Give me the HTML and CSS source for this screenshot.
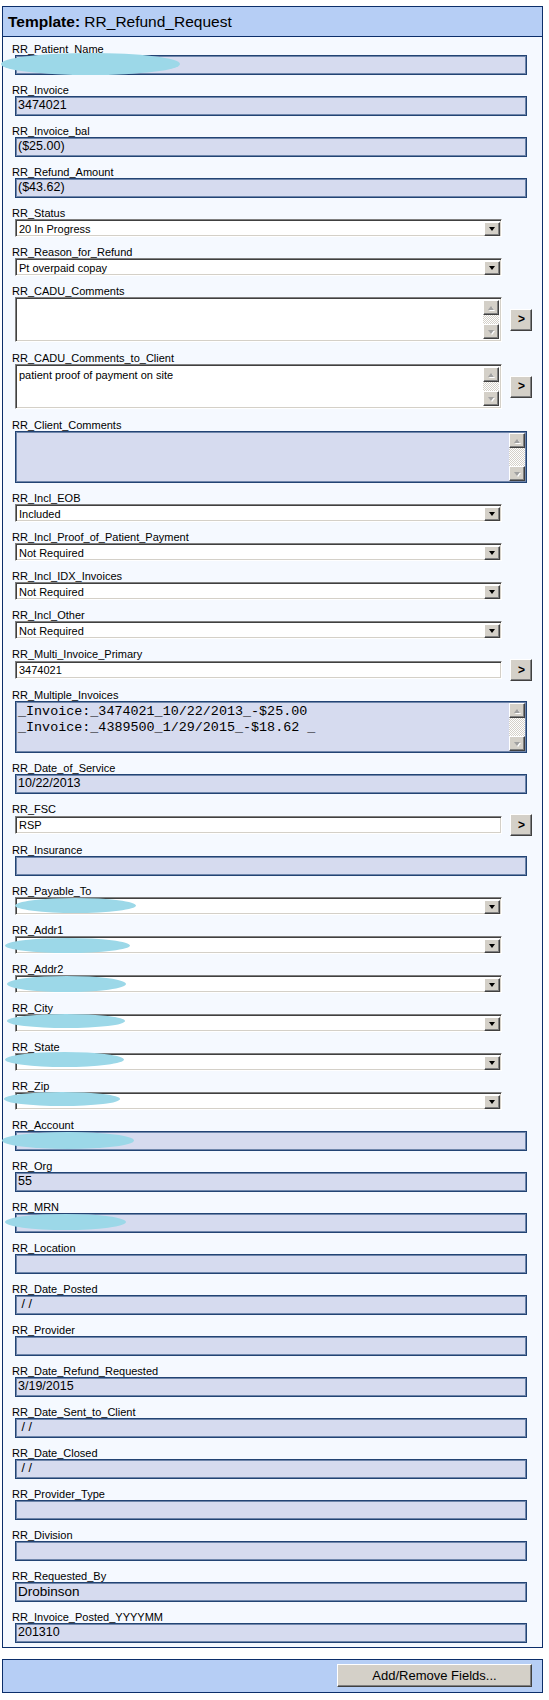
FILE: index.html
```html
<!DOCTYPE html>
<html lang="en">
<head>
    <meta charset="UTF-8">
    <title>Template: RR_Refund_Request</title>
    <link rel="stylesheet" href="styles.css">
</head>
<body>

    <div class="panel">
        <div class="panel-head"><b>Template:</b> RR_Refund_Request</div>

        <div class="panel-body">
            <div class="field">
                <label>RR_Patient_Name</label>
                <div class="text"></div>
                <span class="blot blot-patient"></span>
            </div>
            <div class="field">
                <label>RR_Invoice</label>
                <div class="text">3474021</div>
            </div>
            <div class="field">
                <label>RR_Invoice_bal</label>
                <div class="text">($25.00)</div>
            </div>
            <div class="field">
                <label>RR_Refund_Amount</label>
                <div class="text">($43.62)</div>
            </div>
            <div class="field">
                <label>RR_Status</label>
                <div class="combo"><span class="combo-text">20 In Progress</span><span class="drop"></span></div>
            </div>
            <div class="field">
                <label>RR_Reason_for_Refund</label>
                <div class="combo"><span class="combo-text">Pt overpaid copay</span><span class="drop"></span></div>
            </div>

            <div class="field field-memo">
                <label>RR_CADU_Comments</label>
                <div class="row">
                    <div class="memo">
                        <div class="memo-text"></div>
                        <div class="vscroll"><span class="sb-up"></span><span class="sb-track"></span><span class="sb-down"></span></div>
                    </div>
                    <button class="go">&gt;</button>
                </div>
            </div>
            <div class="field field-memo">
                <label>RR_CADU_Comments_to_Client</label>
                <div class="row">
                    <div class="memo">
                        <div class="memo-text">patient proof of payment on site</div>
                        <div class="vscroll"><span class="sb-up"></span><span class="sb-track"></span><span class="sb-down"></span></div>
                    </div>
                    <button class="go">&gt;</button>
                </div>
            </div>
            <div class="field">
                <label>RR_Client_Comments</label>
                <div class="memo memo-locked">
                    <div class="memo-text"></div>
                    <div class="vscroll"><span class="sb-up"></span><span class="sb-track"></span><span class="sb-down"></span></div>
                </div>
            </div>

            <div class="field">
                <label>RR_Incl_EOB</label>
                <div class="combo"><span class="combo-text">Included</span><span class="drop"></span></div>
            </div>
            <div class="field">
                <label>RR_Incl_Proof_of_Patient_Payment</label>
                <div class="combo"><span class="combo-text">Not Required</span><span class="drop"></span></div>
            </div>
            <div class="field">
                <label>RR_Incl_IDX_Invoices</label>
                <div class="combo"><span class="combo-text">Not Required</span><span class="drop"></span></div>
            </div>
            <div class="field">
                <label>RR_Incl_Other</label>
                <div class="combo"><span class="combo-text">Not Required</span><span class="drop"></span></div>
            </div>
            <div class="field">
                <label>RR_Multi_Invoice_Primary</label>
                <div class="row row-edit">
                    <div class="edit">3474021</div>
                    <button class="go">&gt;</button>
                </div>
            </div>
            <div class="field">
                <label>RR_Multiple_Invoices</label>
                <div class="memo memo-locked">
                    <div class="memo-text mono">_Invoice:_3474021_10/22/2013_-$25.00<br>_Invoice:_4389500_1/29/2015_-$18.62 _</div>
                    <div class="vscroll"><span class="sb-up"></span><span class="sb-track"></span><span class="sb-down"></span></div>
                </div>
            </div>
            <div class="field">
                <label>RR_Date_of_Service</label>
                <div class="text">10/22/2013</div>
            </div>
            <div class="field">
                <label>RR_FSC</label>
                <div class="row row-edit">
                    <div class="edit">RSP</div>
                    <button class="go">&gt;</button>
                </div>
            </div>
            <div class="field">
                <label>RR_Insurance</label>
                <div class="text"></div>
            </div>

            <div class="field">
                <label>RR_Payable_To</label>
                <div class="combo"><span class="combo-text"></span><span class="drop"></span></div>
                <span class="blot blot-payable"></span>
            </div>
            <div class="field">
                <label>RR_Addr1</label>
                <div class="combo"><span class="combo-text"></span><span class="drop"></span></div>
                <span class="blot blot-addr1"></span>
            </div>
            <div class="field">
                <label>RR_Addr2</label>
                <div class="combo"><span class="combo-text"></span><span class="drop"></span></div>
                <span class="blot blot-addr2"></span>
            </div>
            <div class="field">
                <label>RR_City</label>
                <div class="combo"><span class="combo-text"></span><span class="drop"></span></div>
                <span class="blot blot-city"></span>
            </div>
            <div class="field">
                <label>RR_State</label>
                <div class="combo"><span class="combo-text"></span><span class="drop"></span></div>
                <span class="blot blot-state"></span>
            </div>
            <div class="field">
                <label>RR_Zip</label>
                <div class="combo"><span class="combo-text"></span><span class="drop"></span></div>
                <span class="blot blot-zip"></span>
            </div>

            <div class="field">
                <label>RR_Account</label>
                <div class="text"></div>
                <span class="blot blot-account"></span>
            </div>
            <div class="field">
                <label>RR_Org</label>
                <div class="text">55</div>
            </div>
            <div class="field">
                <label>RR_MRN</label>
                <div class="text"></div>
                <span class="blot blot-mrn"></span>
            </div>
            <div class="field">
                <label>RR_Location</label>
                <div class="text"></div>
            </div>
            <div class="field">
                <label>RR_Date_Posted</label>
                <div class="text"> / /</div>
            </div>
            <div class="field">
                <label>RR_Provider</label>
                <div class="text"></div>
            </div>
            <div class="field">
                <label>RR_Date_Refund_Requested</label>
                <div class="text">3/19/2015</div>
            </div>
            <div class="field">
                <label>RR_Date_Sent_to_Client</label>
                <div class="text"> / /</div>
            </div>
            <div class="field">
                <label>RR_Date_Closed</label>
                <div class="text"> / /</div>
            </div>
            <div class="field">
                <label>RR_Provider_Type</label>
                <div class="text"></div>
            </div>
            <div class="field">
                <label>RR_Division</label>
                <div class="text"></div>
            </div>
            <div class="field">
                <label>RR_Requested_By</label>
                <div class="text text-big">Drobinson</div>
            </div>
            <div class="field">
                <label>RR_Invoice_Posted_YYYYMM</label>
                <div class="text">201310</div>
            </div>
        </div>
    </div>

    <div class="toolbar">
        <button class="btn-wide">Add/Remove Fields...</button>
    </div>

</body>
</html>
```

FILE: styles.css
```css
body {
    margin: 0;
    padding: 6px 0 0 2px;
    background-color: #fff;
    font-family: "Liberation Sans", Arial, sans-serif;
    color: #000;
}

.panel {
    width: 541px;
    box-sizing: border-box;
    border: 1px solid #0c2e6a;
    background-color: #f5f9ff;
}

.panel-head {
    height: 29px;
    line-height: 29px;
    padding-left: 5px;
    font-size: 15.5px;
    background-color: #b6cef5;
    border-bottom: 1px solid #0c2e6a;
}

.panel-body {
    padding: 6px 0 4px 9px;
}

.field {
    position: relative;
    margin-bottom: 9px;
}

.field:last-child {
    margin-bottom: 0;
}

.field-memo {
    margin-bottom: 10px;
}

.field label {
    display: block;
    height: 12px;
    font-size: 11px;
    line-height: 12px;
}

/* read-only boxes (lavender) */
.text {
    width: 512px;
    height: 20px;
    margin-left: 3px;
    box-sizing: border-box;
    border: 1px solid #234474;
    box-shadow: inset 1px 1px #6f86ab, inset -1px -1px #6f86ab;
    background-color: #d6dbef;
    padding-left: 2px;
    font-size: 12.5px;
    line-height: 17px;
    white-space: pre;
}

.text-big {
    font-size: 13.5px;
}

/* sunken white controls */
.combo,
.memo,
.edit {
    box-sizing: border-box;
    border: 1px solid;
    border-color: #808080 #fff #fff #808080;
    box-shadow: inset 1px 1px #404040, inset -1px -1px #d4d0c8;
    background-color: #fff;
}

.combo {
    width: 487px;
    height: 18px;
    margin-left: 3px;
    padding: 2px 1px 1px 3px;
    display: flex;
    align-items: center;
    font-size: 11px;
}

.combo-text {
    flex: 1;
}

.drop,
.sb-up,
.sb-down,
.go,
.btn-wide {
    box-sizing: border-box;
    background-color: #d4d0c8;
    border: 1px solid;
    border-color: #fff #404040 #404040 #fff;
    box-shadow: inset -1px -1px #808080;
}

.drop {
    width: 16px;
    height: 14px;
    display: flex;
    align-items: center;
    justify-content: center;
}

.drop::after {
    content: "";
    border-left: 3.5px solid transparent;
    border-right: 3.5px solid transparent;
    border-top: 4px solid #000;
    margin-top: 1px;
}

.row {
    display: flex;
    align-items: center;
    gap: 8px;
    margin-left: 3px;
}

.row-edit {
    height: 20px;
}

.edit {
    width: 487px;
    height: 18px;
    padding: 1px 0 0 3px;
    font-size: 11px;
    line-height: 15px;
}

.go {
    width: 22px;
    height: 22px;
    padding: 0 0 1px 1px;
    font-family: "Liberation Sans", Arial, sans-serif;
    font-size: 12px;
    font-weight: bold;
    line-height: 18px;
    color: #000;
}

/* multi line boxes */
.memo {
    width: 487px;
    height: 45px;
    padding: 2px;
    display: flex;
}

.memo-locked {
    width: 512px;
    height: 52px;
    margin-left: 3px;
    border: 1px solid #234474;
    box-shadow: inset 0 0 0 1px #6f86ab;
    background-color: #d6dbef;
    padding: 1px;
}

.memo-text {
    flex: 1;
    padding: 1px 0 0 1px;
    font-size: 11px;
    line-height: 14px;
}

.mono {
    padding: 1px 0 0 1px;
    font-family: "Liberation Mono", "Courier New", monospace;
    font-size: 13.4px;
    line-height: 16px;
}

.vscroll {
    width: 16px;
    display: flex;
    flex-direction: column;
}

.sb-up,
.sb-down {
    height: 15px;
    display: flex;
    align-items: center;
    justify-content: center;
}

.sb-up::after,
.sb-down::after {
    content: "";
    border-left: 3.5px solid transparent;
    border-right: 3.5px solid transparent;
    filter: drop-shadow(1px 1px 0 #fff);
}

.sb-up::after {
    border-bottom: 4px solid #a0a0a0;
}

.sb-down::after {
    border-top: 4px solid #a0a0a0;
}

.sb-track {
    flex: 1;
    background-image: repeating-conic-gradient(#d4d0c8 0 25%, #fff 0 50%);
    background-size: 2px 2px;
}

/* redaction marks laid over the private values */
.blot {
    position: absolute;
    background-color: #9cd8e8;
    border-radius: 50%;
}

.blot-patient { left: -11px; top: 10px; width: 179px; height: 22px; }
.blot-payable { left: 3px;   top: 13px; width: 121px; height: 15px; }
.blot-addr1   { left: -7px;  top: 14px; width: 125px; height: 15px; }
.blot-addr2   { left: -5px;  top: 13px; width: 119px; height: 16px; }
.blot-city    { left: -5px;  top: 12px; width: 118px; height: 14px; }
.blot-state   { left: -7px;  top: 11px; width: 119px; height: 15px; }
.blot-zip     { left: -8px;  top: 12px; width: 116px; height: 14px; }
.blot-account { left: -10px; top: 13px; width: 132px; height: 17px; }
.blot-mrn     { left: -7px;  top: 13px; width: 121px; height: 16px; }

.toolbar {
    width: 541px;
    height: 34px;
    margin-top: 11px;
    box-sizing: border-box;
    border: 1px solid #0c2e6a;
    background-color: #b6cef5;
    padding: 4px 10px 0 0;
    display: flex;
    justify-content: flex-end;
    align-items: flex-start;
}

.btn-wide {
    width: 195px;
    height: 23px;
    font-family: "Liberation Sans", Arial, sans-serif;
    font-size: 13px;
    color: #000;
    padding: 0;
}
```
